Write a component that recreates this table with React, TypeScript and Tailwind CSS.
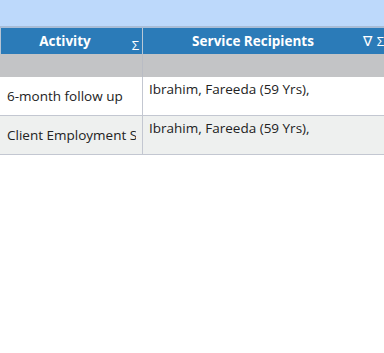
import React from 'react';

const rows = [
  { activity: '6-month follow up', recipients: 'Ibrahim, Fareeda (59 Yrs),' },
  { activity: 'Client Employment Services', recipients: 'Ibrahim, Fareeda (59 Yrs),' },
];

function Sigma() {
  return <span className="text-[13px] font-normal leading-none">Σ</span>;
}

export default function App() {
  return (
    <div className="w-[384px] h-[353px] overflow-hidden bg-white font-['Open_Sans',sans-serif] text-[13.5px] text-[#222]">
      <div className="h-[28px] bg-[#bdd9fb] border-b-2 border-[#a9bdd6]" />
      <div className="w-[390px]">
        {/* header */}
        <div className="flex h-[26px] bg-[#2b7bb8] text-white font-bold text-[13.5px] border-l border-[#b6c4d4]">
          <div className="relative w-[142px] shrink-0 flex items-center justify-center pr-[13px] border-r border-[#b9c8d6]">
            Activity
            <span className="absolute right-[3px] top-[7px]">
              <Sigma />
            </span>
          </div>
          <div className="relative w-[246px] shrink-0 flex items-center justify-center pr-[26px]">
            Service Recipients
            <span className="absolute right-[5px] top-[6px] flex items-center gap-[5px]">
              <span className="text-[14px] font-normal leading-none">∇</span>
              <Sigma />
            </span>
          </div>
        </div>
        {/* group row */}
        <div className="flex h-[23px] bg-[#c3c4c6]">
          <div className="w-[143px] shrink-0 border-r border-[#b9bcc4]" />
          <div className="flex-1" />
        </div>
        {rows.map((r, i) => (
          <div
            key={i}
            className={`flex h-[39px] border-b border-[#c3c7d1] ${i % 2 ? 'bg-[#eef0ef]' : 'bg-white'}`}
          >
            <div className="w-[143px] shrink-0 flex items-center pl-[7px] pr-[6px] border-r border-[#c3c7d1]">
              <span className="block min-w-0 overflow-hidden whitespace-nowrap">{r.activity}</span>
            </div>
            <div className="flex-1 pl-[6px] pt-[2px] whitespace-nowrap overflow-hidden">{r.recipients}</div>
          </div>
        ))}
      </div>
    </div>
  );
}
